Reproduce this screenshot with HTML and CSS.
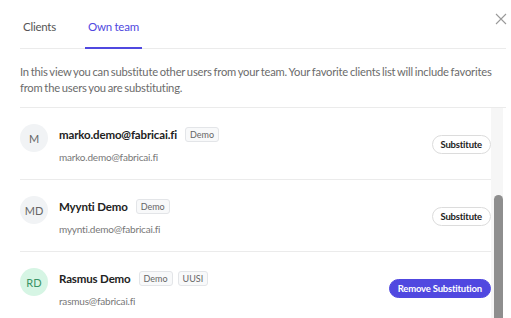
FILE: index.html
```html
<!DOCTYPE html>
<html lang="en">
<head>
  <meta charset="UTF-8" />
  <meta name="viewport" content="width=device-width, initial-scale=1.0"/>
  <title>Substitution</title>
  <link rel="stylesheet" href="styles.css">
</head>
<body>

  <div class="modal">
    <button class="close" aria-label="Close">
      <svg width="12" height="12" viewBox="0 0 12 12">
        <path d="M1 1 L11 11 M11 1 L1 11" stroke="#9a9a9a" stroke-width="1.1" fill="none"/>
      </svg>
    </button>

    <nav class="tabs">
      <a class="tab">Clients</a>
      <a class="tab active">Own team</a>
    </nav>

    <p class="intro">In this view you can substitute other users from your team. Your favorite clients list will include favorites from the users you are substituting.</p>

    <div class="list-wrap">
      <ul class="team-list">
        <li class="member">
          <div class="member-main">
            <div class="avatar">M</div>
            <div class="info">
              <div class="name-row"><span class="name">marko.demo@fabricai.fi</span><span class="badge">Demo</span></div>
              <div class="email">marko.demo@fabricai.fi</div>
            </div>
          </div>
          <button class="btn">Substitute</button>
        </li>
        <li class="member">
          <div class="member-main">
            <div class="avatar">MD</div>
            <div class="info">
              <div class="name-row"><span class="name">Myynti Demo</span><span class="badge">Demo</span></div>
              <div class="email">myynti.demo@fabricai.fi</div>
            </div>
          </div>
          <button class="btn">Substitute</button>
        </li>
        <li class="member">
          <div class="member-main">
            <div class="avatar active">RD</div>
            <div class="info">
              <div class="name-row"><span class="name">Rasmus Demo</span><span class="badge">Demo</span><span class="badge">UUSI</span></div>
              <div class="email">rasmus@fabricai.fi</div>
            </div>
          </div>
          <button class="btn primary">Remove Substitution</button>
        </li>
      </ul>
      <div class="scrollbar"><div class="thumb"></div></div>
    </div>
  </div>

</body>
</html>
```

FILE: styles.css
```css
:root {
  --purple: #5048e0;
  --text: #222;
  --muted: #6b6b6b;
  --line: #ebebeb;
}

body {
  margin: 0;
  font-family: Lato, "Open Sans", sans-serif;
  background-color: #fff;
  color: var(--text);
  height: 318px;
  overflow: hidden;
}

.modal {
  position: relative;
  padding: 0 5px 0 20px;
}

.close {
  position: absolute;
  top: 13px;
  right: 4px;
  border: none;
  background: none;
  padding: 0;
  width: 12px;
  height: 12px;
  cursor: pointer;
}

.close svg {
  display: block;
}

.tabs {
  display: flex;
  gap: 26px;
  border-bottom: 1px solid var(--line);
  height: 48px;
}

.tab {
  padding: 19px 3px 0;
  font-size: 11.5px;
  letter-spacing: -0.25px;
  color: #555;
  line-height: 16px;
  cursor: pointer;
}

.tab.active {
  color: var(--purple);
  border-bottom: 2px solid var(--purple);
  margin-bottom: -1px;
}

.intro {
  margin: 0;
  padding: 15px 12px 11px 0;
  font-size: 11.2px;
  letter-spacing: -0.2px;
  word-spacing: -0.8px;
  line-height: 16px;
  color: var(--muted);
  border-bottom: 1px solid var(--line);
}

.list-wrap {
  display: flex;
  height: 210px;
  margin-right: 3px;
}

.team-list {
  flex: 1;
  list-style: none;
  margin: 0;
  padding: 0;
  overflow: hidden;
}

.scrollbar {
  width: 12px;
  background-color: #f6f6f6;
  display: flex;
  flex-direction: column;
}

.thumb {
  flex: 1;
  margin: 87px 0 0 3px;
  background-color: #8e8e8e;
  border-radius: 5px 5px 0 0;
}

.member {
  display: flex;
  align-items: center;
  justify-content: space-between;
  padding: 16px 0 15px;
  border-bottom: 1px solid var(--line);
}

.member-main {
  display: flex;
  align-items: flex-start;
  gap: 11px;
}

.avatar {
  width: 28px;
  height: 28px;
  border-radius: 50%;
  background-color: #f1f3f5;
  color: #666;
  font-size: 11px;
  display: flex;
  align-items: center;
  justify-content: center;
}

.avatar.active {
  background-color: #d6f5e4;
  color: #3a9466;
}

.name-row {
  display: flex;
  align-items: center;
  gap: 5px;
  height: 20px;
}

.name {
  font-size: 11.5px;
  letter-spacing: -0.15px;
  font-weight: bold;
  margin-right: 3px;
}

.badge {
  font-size: 9px;
  color: #666;
  background-color: #f8f9fa;
  border: 1px solid #e3e5e8;
  border-radius: 3px;
  padding: 0 4px;
  line-height: 13px;
}

.email {
  margin-top: 6px;
  font-size: 10px;
  letter-spacing: -0.2px;
  line-height: 14px;
  color: #777;
}

.btn {
  font-family: inherit;
  font-size: 9.5px;
  letter-spacing: -0.2px;
  font-weight: bold;
  color: var(--text);
  background-color: #fff;
  border: 1px solid #dcdcdc;
  border-radius: 10px;
  height: 19px;
  padding: 0 8px;
  cursor: pointer;
}

.btn.primary {
  background-color: var(--purple);
  border-color: var(--purple);
  color: #fff;
}
```
